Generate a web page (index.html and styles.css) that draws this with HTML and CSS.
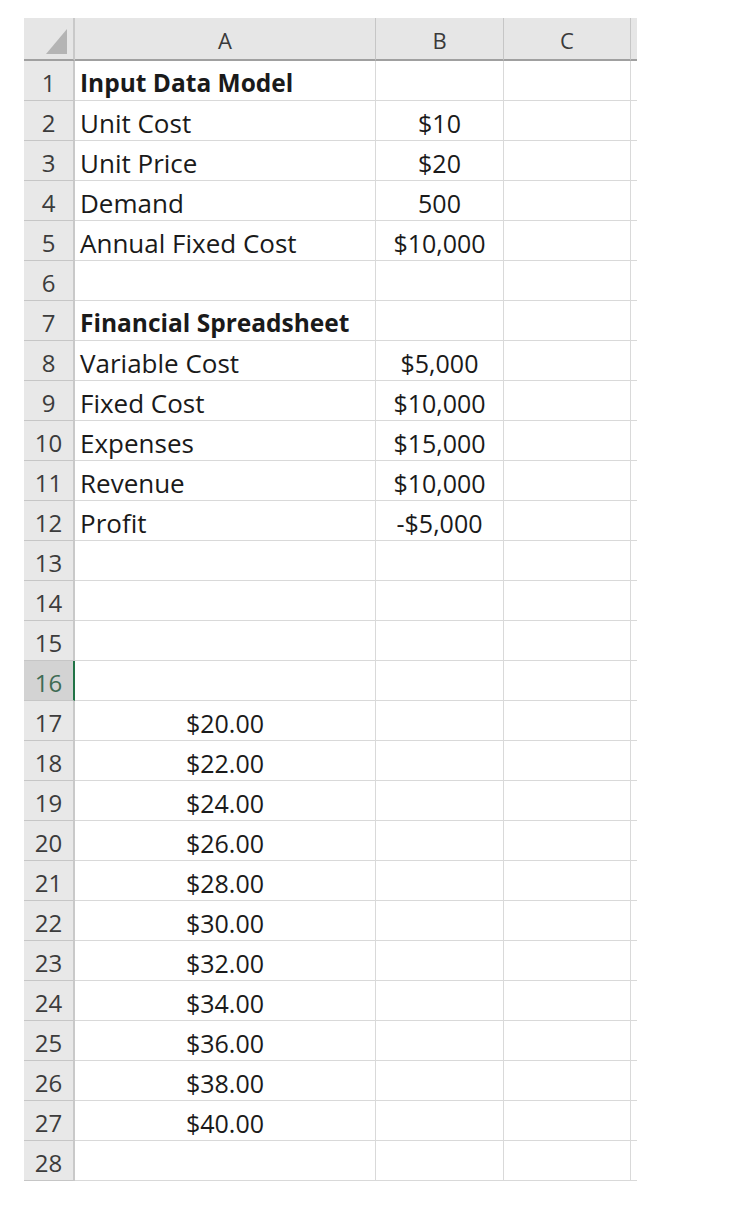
FILE: index.html
```html
<!DOCTYPE html>
<html>
<head>
<meta charset="utf-8">
<link rel="stylesheet" href="styles.css">
</head>
<body>
<div class="sheet">
  <div class="corner"><span class="tri"></span></div>
  <div class="ch">A</div><div class="ch">B</div><div class="ch">C</div><div class="ch edge"></div>

  <div class="rh">1</div><div class="c b">Input Data Model</div><div class="c"></div><div class="c"></div><div class="c edge"></div>
  <div class="rh">2</div><div class="c">Unit Cost</div><div class="c m">$10</div><div class="c"></div><div class="c edge"></div>
  <div class="rh">3</div><div class="c">Unit Price</div><div class="c m">$20</div><div class="c"></div><div class="c edge"></div>
  <div class="rh">4</div><div class="c">Demand</div><div class="c m">500</div><div class="c"></div><div class="c edge"></div>
  <div class="rh">5</div><div class="c">Annual Fixed Cost</div><div class="c m">$10,000</div><div class="c"></div><div class="c edge"></div>
  <div class="rh">6</div><div class="c"></div><div class="c"></div><div class="c"></div><div class="c edge"></div>
  <div class="rh">7</div><div class="c b">Financial Spreadsheet</div><div class="c"></div><div class="c"></div><div class="c edge"></div>
  <div class="rh">8</div><div class="c">Variable Cost</div><div class="c m">$5,000</div><div class="c"></div><div class="c edge"></div>
  <div class="rh">9</div><div class="c">Fixed Cost</div><div class="c m">$10,000</div><div class="c"></div><div class="c edge"></div>
  <div class="rh">10</div><div class="c">Expenses</div><div class="c m">$15,000</div><div class="c"></div><div class="c edge"></div>
  <div class="rh">11</div><div class="c">Revenue</div><div class="c m">$10,000</div><div class="c"></div><div class="c edge"></div>
  <div class="rh">12</div><div class="c">Profit</div><div class="c m">-$5,000</div><div class="c"></div><div class="c edge"></div>
  <div class="rh">13</div><div class="c"></div><div class="c"></div><div class="c"></div><div class="c edge"></div>
  <div class="rh">14</div><div class="c"></div><div class="c"></div><div class="c"></div><div class="c edge"></div>
  <div class="rh">15</div><div class="c"></div><div class="c"></div><div class="c"></div><div class="c edge"></div>
  <div class="rh sel">16</div><div class="c"></div><div class="c"></div><div class="c"></div><div class="c edge"></div>
  <div class="rh">17</div><div class="c m">$20.00</div><div class="c"></div><div class="c"></div><div class="c edge"></div>
  <div class="rh">18</div><div class="c m">$22.00</div><div class="c"></div><div class="c"></div><div class="c edge"></div>
  <div class="rh">19</div><div class="c m">$24.00</div><div class="c"></div><div class="c"></div><div class="c edge"></div>
  <div class="rh">20</div><div class="c m">$26.00</div><div class="c"></div><div class="c"></div><div class="c edge"></div>
  <div class="rh">21</div><div class="c m">$28.00</div><div class="c"></div><div class="c"></div><div class="c edge"></div>
  <div class="rh">22</div><div class="c m">$30.00</div><div class="c"></div><div class="c"></div><div class="c edge"></div>
  <div class="rh">23</div><div class="c m">$32.00</div><div class="c"></div><div class="c"></div><div class="c edge"></div>
  <div class="rh">24</div><div class="c m">$34.00</div><div class="c"></div><div class="c"></div><div class="c edge"></div>
  <div class="rh">25</div><div class="c m">$36.00</div><div class="c"></div><div class="c"></div><div class="c edge"></div>
  <div class="rh">26</div><div class="c m">$38.00</div><div class="c"></div><div class="c"></div><div class="c edge"></div>
  <div class="rh">27</div><div class="c m">$40.00</div><div class="c"></div><div class="c"></div><div class="c edge"></div>
  <div class="rh">28</div><div class="c"></div><div class="c"></div><div class="c"></div><div class="c edge"></div>
</div>
</body>
</html>
```
FILE: styles.css
```css
html, body {
  margin: 0;
  padding: 0;
  background: #ffffff;
}
body {
  padding: 18px 0 0 24px;
  font-family: "Open Sans", "Liberation Sans", sans-serif;
}
.sheet {
  display: grid;
  grid-template-columns: 51px 301px 128px 127px 6px;
  grid-template-rows: 43px;
  grid-auto-rows: 40px;
  width: 613px;
}
.sheet > div {
  box-sizing: border-box;
}
.corner {
  background: #e6e6e6;
  border-right: 2px solid #c9c9c9;
  border-bottom: 2px solid #a0a0a0;
  position: relative;
}
.tri {
  position: absolute;
  right: 6px;
  bottom: 5px;
  width: 0;
  height: 0;
  border-left: 21px solid transparent;
  border-bottom: 25px solid #b4b4b4;
}
.ch {
  background: #e6e6e6;
  border-right: 1px solid #c6c6c6;
  border-bottom: 2px solid #a0a0a0;
  color: #3a3a3a;
  font-size: 22px;
  display: flex;
  align-items: center;
  justify-content: center;
  padding-top: 2px;
}
.ch.edge {
  border-right: none;
}
.rh {
  background: #e8e8e8;
  border-right: 2px solid #c9c9c9;
  border-bottom: 1px solid #c6c6c6;
  color: #3c3c3c;
  font-size: 24px;
  display: flex;
  align-items: center;
  justify-content: center;
  padding-top: 3px;
}
.rh.sel {
  background: #d3d3d3;
  color: #3e6b54;
  border-right: 2px solid #217346;
}
.c {
  border-right: 1px solid #d9d9d9;
  border-bottom: 1px solid #d9d9d9;
  color: #1a1a1a;
  font-size: 26px;
  display: flex;
  align-items: center;
  padding: 4px 0 0 5px;
  white-space: nowrap;
}
.c.edge {
  border-right: none;
}
.c.b {
  font-weight: 700;
  font-size: 24.5px;
}
.c.m {
  justify-content: center;
  padding-left: 0;
  font-size: 25px;
}
```
